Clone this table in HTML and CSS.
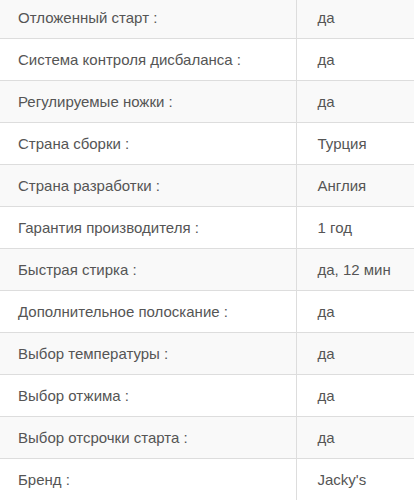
FILE: index.html
```html
<!DOCTYPE html>
<html lang="ru">
<head>
<meta charset="utf-8">
<link rel="stylesheet" href="styles.css">
</head>
<body>
<div class="wrap">
<table class="specs">
<tbody>
<tr><td class="name">Отложенный старт :</td><td class="val">да</td></tr>
<tr><td class="name">Система контроля дисбаланса :</td><td class="val">да</td></tr>
<tr><td class="name">Регулируемые ножки :</td><td class="val">да</td></tr>
<tr><td class="name">Страна сборки :</td><td class="val">Турция</td></tr>
<tr><td class="name">Страна разработки :</td><td class="val">Англия</td></tr>
<tr><td class="name">Гарантия производителя :</td><td class="val">1 год</td></tr>
<tr><td class="name">Быстрая стирка :</td><td class="val">да, 12 мин</td></tr>
<tr><td class="name">Дополнительное полоскание :</td><td class="val">да</td></tr>
<tr><td class="name">Выбор температуры :</td><td class="val">да</td></tr>
<tr><td class="name">Выбор отжима :</td><td class="val">да</td></tr>
<tr><td class="name">Выбор отсрочки старта :</td><td class="val">да</td></tr>
<tr><td class="name">Бренд :</td><td class="val">Jacky's</td></tr>
</tbody>
</table>
</div>
</body>
</html>
```
FILE: styles.css
```css
html, body {
  margin: 0;
  padding: 0;
  background: #fff;
}
.wrap {
  overflow: hidden;
  height: 500px;
}
.specs {
  margin-top: -4px;
  width: 414px;
  border-collapse: collapse;
  font-family: "Liberation Sans", Arial, sans-serif;
  font-size: 15px;
  color: #555;
}
.specs tr {
  border-top: 1px solid #ddd;
}
.specs tr:nth-child(odd) {
  background: #f9f9f9;
}
.specs td {
  height: 42px;
  padding: 0;
  vertical-align: middle;
  box-sizing: border-box;
}
.specs .name {
  width: 296px;
  padding-left: 18px;
}
.specs .val {
  border-left: 1px solid #ddd;
  padding-left: 21px;
}
```
